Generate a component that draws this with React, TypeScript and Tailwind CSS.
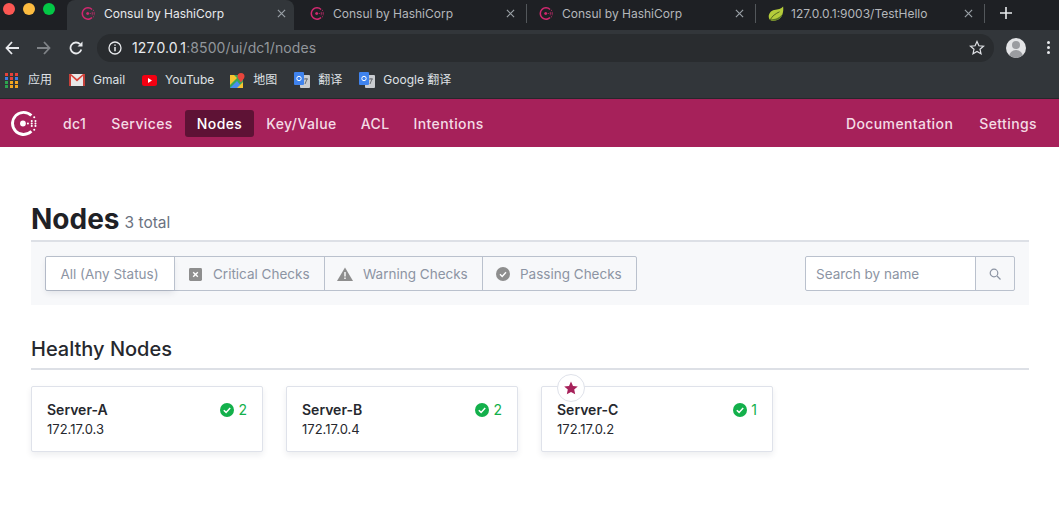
import React from 'react'

function ConsulMark({ className, color }: { className?: string; color: string }) {
  return (
    <svg viewBox="0 0 28 28" className={className} fill={color}>
      <path d="M13 2a12 12 0 1 0 8.6 20.4l-1.9-1.9A9.3 9.3 0 1 1 19.7 7.3l1.9-1.9A12 12 0 0 0 13 2z" />
      <circle cx="12.5" cy="14" r="2.8" />
      <circle cx="17.3" cy="14" r="1" />
      <circle cx="21" cy="11.7" r="1" />
      <circle cx="21" cy="14" r="1" />
      <circle cx="21" cy="16.3" r="1" />
      <circle cx="24.6" cy="11.7" r="1" />
      <circle cx="24.6" cy="14" r="1" />
      <circle cx="24.6" cy="16.3" r="1" />
      <circle cx="23.4" cy="8" r="1" />
      <circle cx="23.4" cy="20" r="1" />
    </svg>
  )
}

function LeafIcon() {
  return (
    <svg viewBox="0 0 18 18" className="w-4 h-4 shrink-0">
      <path d="M17 .5c.8 6-.8 12.500-6 15-3.500 1.700-8 1.500-9.500-1C-.5 11 2 5.500 7 4.500c4-.8 8-1.200 10-4z" fill="#b4cb3a" />
      <path d="M1.500 14.500c.7 2 6 2.500 9.500 1 3-1.400 4.800-4 5.600-7-3 4.500-9 7.500-15.100 6z" fill="#5d7a26" />
      <path d="M2.500 15.500c2-4 6-7 10.500-9" stroke="#46591f" strokeWidth="1" fill="none" />
    </svg>
  )
}

function CloseX({ color = '#9aa0a6' }: { color?: string }) {
  return (
    <svg viewBox="0 0 10 10" className="w-[9px] h-[9px] shrink-0" stroke={color} strokeWidth="1.3">
      <path d="M1 1l8 8M9 1l-8 8" />
    </svg>
  )
}

function Tab({ title, active, leaf }: { title: string; active?: boolean; leaf?: boolean }) {
  return (
    <div
      className={
        active
          ? 'w-[227px] h-[30px] flex items-center pl-[14px] pr-[8px] pb-[3px] bg-[#32363a] rounded-t-lg text-[#e8eaed]'
          : 'w-[229px] h-[30px] flex items-center pl-[12px] pr-[12px] pb-[3px] text-[#b4b7bb] relative'
      }
    >
      {leaf ? <LeafIcon /> : <ConsulMark className="w-[15px] h-[15px] shrink-0" color="#d0286f" />}
      <span className={leaf ? 'ml-[7px] flex-1 text-[12px] whitespace-nowrap' : 'ml-[8px] flex-1 text-[12px] whitespace-nowrap'}>{title}</span>
      <CloseX />
      {!active && <span className="absolute right-0 top-[4px] h-[19px] w-px bg-[#53575b]" />}
    </div>
  )
}

function Bookmark({ icon, label }: { icon: React.ReactNode; label: string }) {
  return (
    <div className="flex items-center gap-[8px] text-[12px] text-[#dfe1e5] whitespace-nowrap">
      {icon}
      <span>{label}</span>
    </div>
  )
}

function AppsGrid() {
  const colors = ['#e5423a', '#e5423a', '#e5423a', '#3f7fe8', '#e5423a', '#3f7fe8', '#2da44e', '#f2a51f', '#f2a51f', '#2da44e', '#f2a51f', '#f2a51f']
  return (
    <div className="grid grid-cols-3 gap-x-[2px] gap-y-px w-[13px] h-[15px] mr-[2px]">
      {colors.map((c, i) => (
        <span key={i} className="w-[3px] h-[3px]" style={{ background: c }} />
      ))}
    </div>
  )
}

function GmailIcon() {
  return (
    <svg viewBox="0 0 16 12" className="w-[16px] h-[12px]">
      <rect width="16" height="12" fill="#e8e8e8" />
      <path d="M0 0h2v12H0zM14 0h2v12h-2z" fill="#c5403a" />
      <path d="M0 0h2l6 5 6-5h2L8 7.500z" fill="#d9443b" />
    </svg>
  )
}

function YoutubeIcon() {
  return (
    <svg viewBox="0 0 15 11" className="w-[15px] h-[11px]">
      <rect width="15" height="11" rx="2.500" fill="#f40012" />
      <path d="M6 3l4 2.500L6 8z" fill="#fff" />
    </svg>
  )
}

function MapsIcon() {
  return (
    <svg viewBox="0 0 15 15" className="w-[15px] h-[15px] -ml-px">
      <rect y="2" width="13" height="13" fill="#3aa757" />
      <path d="M0 15l7-7 6 7z" fill="#4a8df0" />
      <path d="M0 2h4l3 3-7 7z" fill="#f4c430" />
      <path d="M7 15l6-6v6z" fill="#f4c430" />
      <path d="M11 0a3.500 3.500 0 0 1 3.500 3.500c0 2-2 3.500-3.500 6-1.500-2.500-3.500-4-3.500-6A3.500 3.500 0 0 1 11 0z" fill="#e8453c" />
    </svg>
  )
}

function TranslateIcon() {
  return (
    <svg viewBox="0 0 16 16" className="w-[16px] h-[16px]">
      <rect x="6" y="3" width="10" height="13" rx="1" fill="#c9ccd0" />
      <path d="M10 7h4M12 6v1M11 12l2-5" stroke="#6b6f74" strokeWidth="1" fill="none" />
      <rect width="10" height="13" rx="1" fill="#3f83ee" />
      <circle cx="5" cy="6.500" r="2.200" fill="none" stroke="#fff" strokeWidth="1" />
    </svg>
  )
}

function BrowserChrome() {
  return (
    <div className="bg-[#32363a]">
      <div className="h-[30px] bg-[#1e2024] flex items-start relative">
        <div className="w-[67px] flex items-center gap-[8px] pl-[3px] pt-[3px]">
          <span className="w-3 h-3 rounded-full bg-[#fc5753]" />
          <span className="w-3 h-3 rounded-full bg-[#fdbc40]" />
          <span className="w-3 h-3 rounded-full bg-[#03c846]" />
        </div>
        <Tab title="Consul by HashiCorp" active />
        <div className="flex ml-[4px]">
          <Tab title="Consul by HashiCorp" />
          <Tab title="Consul by HashiCorp" />
          <Tab title="127.0.0.1:9003/TestHello" leaf />
        </div>
        <svg viewBox="0 0 12 12" className="w-3 h-3 ml-[15px] mt-[7px]" stroke="#e8eaed" strokeWidth="1.600">
          <path d="M6 0v12M0 6h12" />
        </svg>
      </div>
      <div className="h-[35px] flex items-center">
        <div className="w-[97px] flex items-center pl-[5px] gap-[18px] shrink-0">
          <svg viewBox="0 0 14 14" className="w-[14px] h-[14px]" fill="none" stroke="#e8eaed" strokeWidth="1.800">
            <path d="M14 7H1.500M7 1L1.500 7 7 13" />
          </svg>
          <svg viewBox="0 0 14 14" className="w-[14px] h-[14px]" fill="none" stroke="#7f8387" strokeWidth="1.800">
            <path d="M0 7h12.500M7 1l5.500 6L7 13" />
          </svg>
          <svg viewBox="0 0 14 14" className="w-[14px] h-[14px]" fill="none" stroke="#e8eaed" strokeWidth="1.800">
            <path d="M12.300 8.500A5.500 5.500 0 1 1 11 3.200" />
            <path d="M13.500 .5v5h-5z" fill="#e8eaed" stroke="none" />
          </svg>
        </div>
        <div className="w-[897px] h-[28px] bg-[#292c2f] rounded-full flex items-center pl-[11px] pr-[9px] shrink-0">
          <svg viewBox="0 0 14 14" className="w-[14px] h-[14px]" fill="none" stroke="#e8eaed" strokeWidth="1.300">
            <circle cx="7" cy="7" r="6" />
            <path d="M7 6v4.200M7 3.500v1.300" strokeWidth="1.500" />
          </svg>
          <div className="ml-[10px] text-[14px] tracking-[0.1px] text-[#e8eaed] flex-1">
            127.0.0.1<span className="text-[#92979c]">:8500/ui/dc1/nodes</span>
          </div>
          <svg viewBox="0 0 16 16" className="w-[16px] h-[16px]" fill="none" stroke="#dfe1e5" strokeWidth="1.200">
            <path d="M8 1.500l1.900 4.300 4.600.4-3.500 3 1 4.500L8 11.400l-4 2.300 1-4.500-3.500-3 4.600-.4z" />
          </svg>
        </div>
        <span className="w-[20px] h-[20px] ml-[12px] rounded-full bg-[#e3e4e6] overflow-hidden flex flex-col items-center shrink-0">
          <span className="w-[8px] h-[8px] rounded-full bg-[#9a9ca0] mt-[3px]" />
          <span className="w-[14px] h-[8px] rounded-t-full bg-[#9a9ca0] mt-px" />
        </span>
        <span className="ml-[21px] flex flex-col gap-[2px] shrink-0">
          <span className="w-[3px] h-[3px] rounded-full bg-[#e8eaed]" />
          <span className="w-[3px] h-[3px] rounded-full bg-[#e8eaed]" />
          <span className="w-[3px] h-[3px] rounded-full bg-[#e8eaed]" />
        </span>
      </div>
      <div className="h-[33px] flex items-center pl-[5px] pb-[3px] gap-[17px]">
        <Bookmark icon={<AppsGrid />} label="应用" />
        <Bookmark icon={<GmailIcon />} label="Gmail" />
        <Bookmark icon={<YoutubeIcon />} label="YouTube" />
        <Bookmark icon={<MapsIcon />} label="地图" />
        <Bookmark icon={<TranslateIcon />} label="翻译" />
        <Bookmark icon={<TranslateIcon />} label="Google 翻译" />
      </div>
      <div className="h-px bg-[#26282b]" />
    </div>
  )
}

function NavLink({ label, active }: { label: string; active?: boolean }) {
  return (
    <a
      className={
        active
          ? 'h-[27px] px-[12px] flex items-center rounded-[3px] bg-[#5e1235] text-white'
          : 'h-[27px] px-[12px] flex items-center text-[#f4dbe5]'
      }
    >
      {label}
    </a>
  )
}

function FilterIcon({ kind }: { kind: 'critical' | 'warning' | 'passing' }) {
  if (kind === 'critical') {
    return (
      <svg viewBox="0 0 14 14" className="w-[13px] h-[13px]">
        <rect width="14" height="14" rx="1.500" fill="#8e8e8e" />
        <path d="M4.500 4.500l5 5M9.500 4.500l-5 5" stroke="#fff" strokeWidth="1.500" />
      </svg>
    )
  }
  if (kind === 'warning') {
    return (
      <svg viewBox="0 0 16 14" className="w-[16px] h-[14px]">
        <path d="M8 .5L16 14H0z" fill="#8e8e8e" />
        <path d="M8 5v4.500M8 10.500V12" stroke="#fff" strokeWidth="1.400" />
      </svg>
    )
  }
  return (
    <svg viewBox="0 0 14 14" className="w-[14px] h-[14px]">
      <circle cx="7" cy="7" r="7" fill="#8e8e8e" />
      <path d="M4 7.200l2.200 2.200L10 5.200" fill="none" stroke="#fff" strokeWidth="1.400" />
    </svg>
  )
}

function NodeCard({ name, ip, checks, leader }: { name: string; ip: string; checks: number; leader?: boolean }) {
  return (
    <div className="relative w-[232px] h-[66px] bg-white border border-[#dfe2ea] rounded-[2px] shadow-[0_3px_6px_rgba(31,41,66,0.08)] pl-[15px] pr-[15px] pt-[13px]">
      {leader && (
        <span className="absolute left-[15px] -top-[13px] w-[28px] h-[28px] rounded-full bg-white border border-[#dfe2ea] flex items-center justify-center">
          <svg viewBox="0 0 14 14" className="w-[14px] h-[14px]" fill="#a6215a">
            <path d="M7 .5l2 4.400 4.800.5-3.600 3.200 1 4.700L7 10.900l-4.200 2.400 1-4.700L.2 5.400 5 4.900z" />
          </svg>
        </span>
      )}
      <div className="flex items-center justify-between h-[19px]">
        <span className="text-[14px] font-semibold text-[#26282e]">{name}</span>
        <span className="flex items-center gap-[4px] text-[14px] text-[#13b04b]">
          <svg viewBox="0 0 14 14" className="w-[14px] h-[14px]">
            <circle cx="7" cy="7" r="7" fill="#13b04b" />
            <path d="M3.800 7.200l2.300 2.200L10.200 5" fill="none" stroke="#fff" strokeWidth="1.500" />
          </svg>
          {checks}
        </span>
      </div>
      <div className="text-[13px] leading-[19px] mt-px text-[#26282e]">{ip}</div>
    </div>
  )
}

export default function App() {
  return (
    <div className="w-[1059px] h-[532px] overflow-hidden bg-white font-['Inter',sans-serif]">
      <div className="font-['Inter','Noto_Sans_CJK_SC',sans-serif]">
        <BrowserChrome />
      </div>

      <header className="h-[48px] bg-[#a6215a] flex items-center justify-between text-[14px] font-medium tracking-[0.4px]">
        <div className="flex items-center">
          <ConsulMark className="w-[29px] h-[29px] ml-[10px] mr-[12px]" color="#ffffff" />
          <span className="mr-px">
            <NavLink label="dc1" />
          </span>
          <NavLink label="Services" />
          <NavLink label="Nodes" active />
          <NavLink label="Key/Value" />
          <NavLink label="ACL" />
          <NavLink label="Intentions" />
        </div>
        <div className="flex items-center gap-[2px] pr-[10px]">
          <NavLink label="Documentation" />
          <NavLink label="Settings" />
        </div>
      </header>

      <main className="px-[31px] w-[1029px] box-content">
        <div className="w-[998px]">
          <div className="h-[95px] border-b-2 border-[#dde0e6] flex items-end pb-[3px] text-[#1f2126]">
            <h1 className="text-[28px] leading-[36px] font-bold">Nodes</h1>
            <span className="ml-[5px] mb-[3px] text-[15.5px] text-[#6b7280]">3 total</span>
          </div>

          <div className="h-[63px] bg-[#f7f8fa] px-[14px] flex items-center justify-between">
            <div className="flex h-[35px] text-[13.5px] text-[#8c94a3] border border-[#bac1cd] rounded-[2px]">
              <div className="w-[128px] flex items-center justify-center pt-px pr-px bg-white rounded-l-[2px] shadow-[0_3px_6px_rgba(31,41,66,0.1)]">
                All (Any Status)
              </div>
              <div className="w-[150px] flex items-center gap-[11px] pl-[14px] pt-px border-l border-[#bac1cd]">
                <FilterIcon kind="critical" />
                Critical Checks
              </div>
              <div className="w-[158px] flex items-center gap-[10px] pl-[12px] pt-px border-l border-[#bac1cd]">
                <FilterIcon kind="warning" />
                Warning Checks
              </div>
              <div className="w-[154px] flex items-center gap-[10px] pl-[13px] pt-px border-l border-[#bac1cd]">
                <FilterIcon kind="passing" />
                Passing Checks
              </div>
            </div>
            <div className="flex h-[35px] w-[210px] border border-[#bac1cd] rounded-[2px] text-[13.5px] text-[#8c94a3]">
              <div className="w-[169px] bg-white flex items-center pl-[10px] pt-px rounded-l-[2px]">Search by name</div>
              <div className="flex-1 flex items-center justify-center border-l border-[#bac1cd]">
                <svg viewBox="0 0 12 12" className="w-[12px] h-[12px]" fill="none" stroke="#8c94a3" strokeWidth="1.200">
                  <circle cx="5" cy="5" r="3.800" />
                  <path d="M8 8l3.500 3.500" />
                </svg>
              </div>
            </div>
          </div>

          <h2 className="mt-[30px] h-[35px] border-b-2 border-[#dde0e6] text-[20px] leading-[28px] font-medium text-[#26282e]">
            Healthy Nodes
          </h2>

          <div className="flex gap-[23px] mt-[16px]">
            <NodeCard name="Server-A" ip="172.17.0.3" checks={2} />
            <NodeCard name="Server-B" ip="172.17.0.4" checks={2} />
            <NodeCard name="Server-C" ip="172.17.0.2" checks={1} leader />
          </div>
        </div>
      </main>
    </div>
  )
}
